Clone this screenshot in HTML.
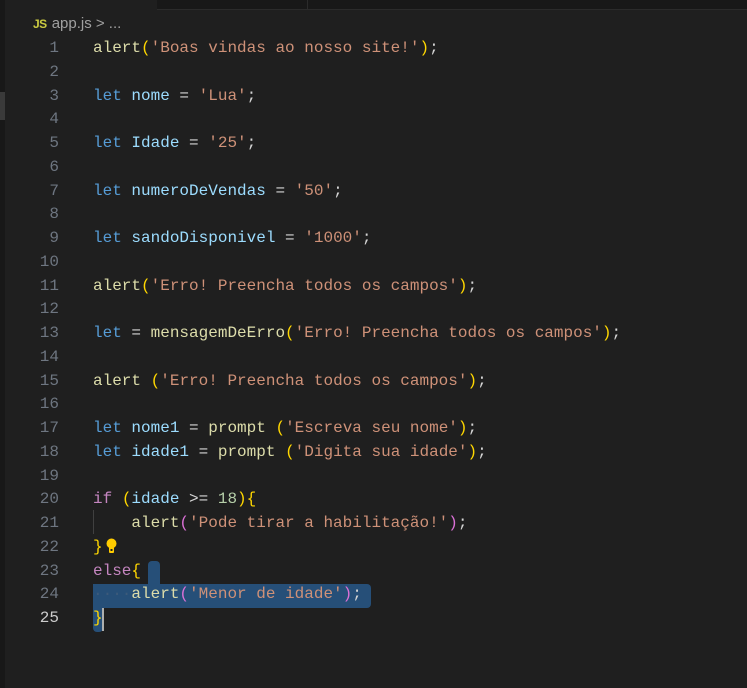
<!DOCTYPE html>
<html><head><meta charset="utf-8"><style>
html,body{margin:0;padding:0;}
body{width:747px;height:688px;background:#1f1f1f;position:relative;overflow:hidden;font-family:"Liberation Mono",monospace;}
.tabbar{position:absolute;left:157px;top:0;width:590px;height:9px;background:#181818;border-bottom:1px solid #2b2b2b;}
.tabsep{position:absolute;left:307px;top:0;width:1px;height:9px;background:#2b2b2b;}
.lstrip{position:absolute;left:0;top:0;width:5px;height:688px;background:#181818;}
.lmark{position:absolute;left:0;top:92px;width:5px;height:28px;background:#3a3a3a;}
.crumb{position:absolute;left:33px;top:15px;font-family:"Liberation Sans",sans-serif;font-size:15px;color:#a0a0a0;white-space:pre;}
.crumb b{color:#cbcb41;font-size:12px;font-weight:bold;margin-right:5px;letter-spacing:-0.5px}
.ln{position:absolute;left:0;width:59px;text-align:right;font-size:16px;color:#6e7681;line-height:23.75px;height:23.75px}
.ln.cur{color:#cccccc}
.code{position:absolute;left:93px;font-size:16px;line-height:23.75px;height:23.75px;white-space:pre;color:#d4d4d4}
.k{color:#569cd6}.v{color:#9cdcfe}.f{color:#dcdcaa}.s{color:#ce9178}.p{color:#ffd700}.m{color:#da70d6}.c{color:#c586c0}.n{color:#b5cea8}.w{color:#d4d4d4}
.sel{position:absolute;background:#264f78;}
.guide{position:absolute;left:93px;width:1px;background:#404040}
</style></head><body>
<div class="lstrip"></div><div class="lmark"></div>
<div class="tabbar"></div><div class="tabsep"></div>
<div class="crumb"><b>JS</b>app.js &gt; ...</div>

<div class="guide" style="top:510px;height:24px"></div>
<div class="sel" style="left:148px;top:561px;width:12px;height:24px;border-radius:4px 4px 0 0"></div>
<div class="sel" style="left:93px;top:584px;width:278px;height:24px;border-radius:0 4px 4px 0"></div>
<div class="sel" style="left:93px;top:608px;width:10px;height:24px;border-radius:0 0 4px 4px"></div>
<div style="position:absolute;left:102px;top:608px;width:2px;height:23px;background:#aeafad"></div>
<div style="position:absolute;left:106px;top:538px;width:11px;height:17px;">
<svg width="11" height="17" viewBox="0 0 11 17"><circle cx="5.5" cy="5.5" r="5" fill="#ffcc00"/><rect x="3" y="9" width="5" height="6" rx="1" fill="#ffcc00"/><rect x="4.5" y="11" width="2" height="2" fill="#1f1f1f"/></svg></div>

<div class="ln" style="top:37px">1</div><div class="code" style="top:37px"><span class="f">alert</span><span class="p">(</span><span class="s">'Boas vindas ao nosso site!'</span><span class="p">)</span>;</div>
<div class="ln" style="top:60.75px">2</div>
<div class="ln" style="top:84.5px">3</div><div class="code" style="top:84.5px"><span class="k">let</span> <span class="v">nome</span> = <span class="s">'Lua'</span>;</div>
<div class="ln" style="top:108.25px">4</div>
<div class="ln" style="top:132px">5</div><div class="code" style="top:132px"><span class="k">let</span> <span class="v">Idade</span> = <span class="s">'25'</span>;</div>
<div class="ln" style="top:155.75px">6</div>
<div class="ln" style="top:179.5px">7</div><div class="code" style="top:179.5px"><span class="k">let</span> <span class="v">numeroDeVendas</span> = <span class="s">'50'</span>;</div>
<div class="ln" style="top:203.25px">8</div>
<div class="ln" style="top:227px">9</div><div class="code" style="top:227px"><span class="k">let</span> <span class="v">sandoDisponivel</span> = <span class="s">'1000'</span>;</div>
<div class="ln" style="top:250.75px">10</div>
<div class="ln" style="top:274.5px">11</div><div class="code" style="top:274.5px"><span class="f">alert</span><span class="p">(</span><span class="s">'Erro! Preencha todos os campos'</span><span class="p">)</span>;</div>
<div class="ln" style="top:298.25px">12</div>
<div class="ln" style="top:322px">13</div><div class="code" style="top:322px"><span class="k">let</span> = <span class="f">mensagemDeErro</span><span class="p">(</span><span class="s">'Erro! Preencha todos os campos'</span><span class="p">)</span>;</div>
<div class="ln" style="top:345.75px">14</div>
<div class="ln" style="top:369.5px">15</div><div class="code" style="top:369.5px"><span class="f">alert</span> <span class="p">(</span><span class="s">'Erro! Preencha todos os campos'</span><span class="p">)</span>;</div>
<div class="ln" style="top:393.25px">16</div>
<div class="ln" style="top:417px">17</div><div class="code" style="top:417px"><span class="k">let</span> <span class="v">nome1</span> = <span class="f">prompt</span> <span class="p">(</span><span class="s">'Escreva seu nome'</span><span class="p">)</span>;</div>
<div class="ln" style="top:440.75px">18</div><div class="code" style="top:440.75px"><span class="k">let</span> <span class="v">idade1</span> = <span class="f">prompt</span> <span class="p">(</span><span class="s">'Digita sua idade'</span><span class="p">)</span>;</div>
<div class="ln" style="top:464.5px">19</div>
<div class="ln" style="top:488.25px">20</div><div class="code" style="top:488.25px"><span class="c">if</span> <span class="p">(</span><span class="v">idade</span> &gt;= <span class="n">18</span><span class="p">)</span><span class="p">{</span></div>
<div class="ln" style="top:512px">21</div><div class="code" style="top:512px">    <span class="f">alert</span><span class="m">(</span><span class="s">'Pode tirar a habilitação!'</span><span class="m">)</span>;</div>
<div class="ln" style="top:535.75px">22</div><div class="code" style="top:535.75px"><span class="p">}</span></div>
<div class="ln" style="top:559.5px">23</div><div class="code" style="top:559.5px"><span class="c">else</span><span class="p">{</span></div>
<div class="ln" style="top:583.25px">24</div><div class="code" style="top:583.25px"><span style="color:#3c5a7a">····</span><span class="f">alert</span><span class="m">(</span><span class="s">'Menor de idade'</span><span class="m">)</span>;</div>
<div class="ln cur" style="top:607px">25</div><div class="code" style="top:607px"><span class="p">}</span></div>
</body></html>
